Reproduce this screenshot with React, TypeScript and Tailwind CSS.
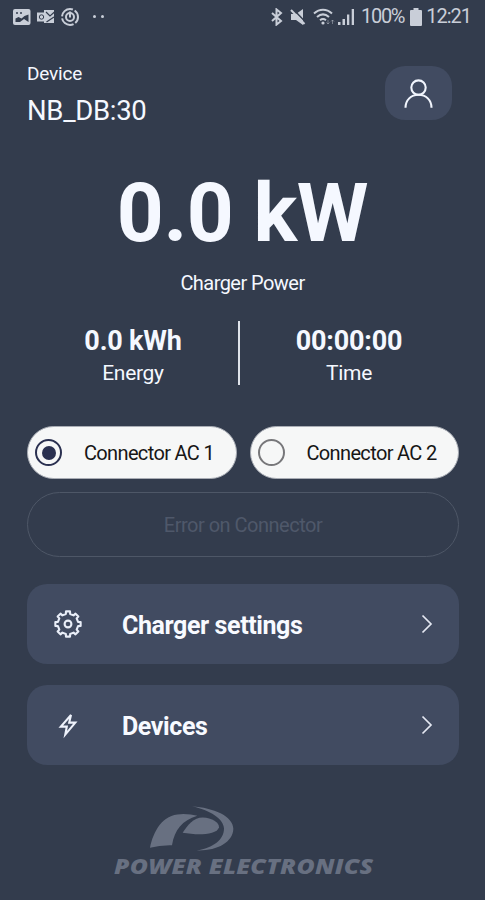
import { useState } from "react";
import type { ReactNode } from "react";
import clsx from "clsx";

const connectors = [
  { id: 1, name: "Connector AC 1" },
  { id: 2, name: "Connector AC 2" },
];

// Outline of a cog with rounded teeth, centred on 0,0
function cogPath(teeth: number, outer: number, inner: number) {
  const step = (Math.PI * 2) / teeth;
  const points: string[] = [];
  for (let i = 0; i < teeth; i++) {
    const a = i * step - Math.PI / 2;
    const corners = [
      [inner, -0.27],
      [outer, -0.2],
      [outer, 0.2],
      [inner, 0.27],
    ];
    corners.forEach(([r, t]) => {
      const x = Math.cos(a + t * step) * r;
      const y = Math.sin(a + t * step) * r;
      points.push(`${x.toFixed(2)} ${y.toFixed(2)}`);
    });
  }
  return `M${points.join("L")}Z`;
}

function GearIcon() {
  return (
    <svg
      viewBox="-15 -15 30 30"
      className="h-[30px] w-[30px]"
      fill="none"
      stroke="#e9eef8"
      strokeWidth="2.1"
      strokeLinejoin="round"
    >
      <path d={cogPath(8, 12.8, 10.3)} />
      <circle r="3.4" />
    </svg>
  );
}

function BoltIcon() {
  return (
    <svg
      viewBox="0 0 20 28"
      className="h-7 w-5"
      fill="none"
      stroke="#eef2fb"
      strokeWidth="2.1"
      strokeLinejoin="miter"
    >
      <path d="M13 4 2.800 15.600h6L7.300 23.600 17.300 11.600h-6.100Z" />
    </svg>
  );
}

function ChevronIcon() {
  return (
    <svg
      viewBox="0 0 12 20"
      className="h-5 w-3"
      fill="none"
      stroke="#e4e8f2"
      strokeWidth="1.7"
    >
      <path d="M1.500 1.500 10 10l-8.500 8.500" />
    </svg>
  );
}

function UserIcon() {
  return (
    <svg
      viewBox="0 0 30 30"
      className="mt-px h-[30px] w-[30px]"
      fill="none"
      stroke="#f1f5fd"
      strokeWidth="2.1"
    >
      <circle cx="14.500" cy="8.600" r="7.200" />
      <path d="M1.500 28.800C1.500 21 7 15.800 14.500 15.800S27.500 21 27.500 28.800" />
    </svg>
  );
}

function StatusBar() {
  return (
    <div className="flex h-[33px] items-center justify-between pr-[14px] pl-[13px] text-[#c9ced8]">
      <div className="flex items-center">
        <svg viewBox="0 0 18 16" className="h-4 w-[18px]">
          <rect width="17.500" height="16" rx="2" fill="currentColor" />
          <path
            d="M2.500 13V9.500l3-1.500 3 1.500L11.500 7l4-1.500V13Z"
            fill="#333c4d"
          />
          <path d="M3 4h2M7 4h2" stroke="#333c4d" strokeWidth="1.500" />
          <path d="m7 13 4-3 4.500 3Z" fill="currentColor" />
        </svg>
        <svg viewBox="0 0 18 16" className="ml-[6px] h-4 w-[18px]">
          <path d="M7 1h10v13H7Z" fill="currentColor" />
          <path d="M0 3.500h9v9H0Z" fill="currentColor" />
          <path
            d="m9 3 4 4 4.500-4M9.500 13 17 8"
            stroke="#333c4d"
            strokeWidth="1.200"
            fill="none"
          />
          <circle
            cx="4.500"
            cy="8"
            r="2.200"
            stroke="#333c4d"
            strokeWidth="1"
            fill="none"
          />
        </svg>
        <svg
          viewBox="0 0 20 20"
          className="ml-[5px] h-5 w-5"
          fill="none"
          stroke="currentColor"
        >
          <circle
            cx="10"
            cy="10"
            r="8"
            strokeWidth="2"
            strokeDasharray="14.800 2"
            strokeDashoffset="8"
          />
          <circle cx="10" cy="10" r="4" strokeWidth="2" />
          <path d="M10 4.500v6" strokeWidth="2" />
        </svg>
        <div className="ml-[13px] flex gap-[5px]">
          <span className="h-[3px] w-[3px] rounded-full bg-[#c9ced8]" />
          <span className="h-[3px] w-[3px] rounded-full bg-[#c9ced8]" />
        </div>
      </div>

      <div className="flex items-center">
        <svg
          viewBox="0 0 12 18"
          className="h-[18px] w-3"
          fill="none"
          stroke="currentColor"
          strokeWidth="2"
        >
          <path d="m1 5 9 8-4.500 3.600V1.400L10 5l-9 8" />
        </svg>
        <svg viewBox="0 0 16 18" className="ml-[7px] h-[18px] w-4">
          <path d="M1 6h5l7-5v16l-7-5H1Z" fill="currentColor" />
          <path d="m2.500 0.500 14 14.500" stroke="#333c4d" strokeWidth="1.500" />
          <path d="m1 2 13.500 14" stroke="currentColor" strokeWidth="2" />
        </svg>
        <svg
          viewBox="0 0 23 18"
          className="ml-[7px] h-[18px] w-[23px]"
          fill="none"
          stroke="currentColor"
        >
          <path
            d="M1 5.500c5.500-5 12.500-5 18 0M4 9c4-3.500 8-3.500 12 0M7 12.200c2-1.600 4-1.600 6 0"
            strokeWidth="2"
          />
          <circle cx="10" cy="15" r="1.600" fill="currentColor" stroke="none" />
          <path
            d="M15 12v4m-1.500-1.500L15 16l1.500-1.500M19.500 16v-4M18 13.500l1.500-1.500 1.500 1.500"
            strokeWidth="1"
            opacity="0.450"
          />
        </svg>
        <svg
          viewBox="0 0 17 17"
          className="ml-[2px] h-[17px] w-[17px]"
          fill="currentColor"
        >
          <path d="M0 14h2.500v3H0ZM4.500 11H7v6H4.500ZM9 6.500h2.300V17H9ZM13.700 1H16v16h-2.300Z" />
        </svg>
        <span className="ml-[6px] text-[20px] leading-[33px] tracking-[-1.300px]">
          100%
        </span>
        <svg
          viewBox="0 0 12 18"
          className="ml-[6px] h-[18px] w-3"
          fill="currentColor"
        >
          <path d="M3.500 0h5v2H11a1 1 0 0 1 1 1v14a1 1 0 0 1-1 1H1a1 1 0 0 1-1-1V3a1 1 0 0 1 1-1h2.500Z" />
        </svg>
        <span className="ml-[4px] text-[20px] leading-[33px] tracking-[-1px]">
          12:21
        </span>
      </div>
    </div>
  );
}

function MenuRow({ icon, label }: { icon: ReactNode; label: string }) {
  return (
    <button className="flex h-20 w-full items-center rounded-[20px] bg-[#414b61] pr-[26px] text-left">
      <span className="flex w-[81px] justify-center">{icon}</span>
      <span className="mt-[3px] flex-1 pl-[14px] text-[25px] leading-8 font-bold tracking-[-0.400px] text-[#f8faff]">
        {label}
      </span>
      <ChevronIcon />
    </button>
  );
}

function Logo() {
  return (
    <div className="flex flex-col items-start text-[#687081]">
      <svg
        viewBox="150 30 252 140"
        className="ml-[36px] h-[47px] w-[84px]"
        fill="currentColor"
      >
        <path d="M150 158C160 108 188 57 242 57Q270 56 292 62C246 76 224 104 216 150Q180 149 150 158Z" />
        <path d="M248 113C262 90 282 67 308 67C336 68 358 82 357 96C352 114 320 118 286 117Q266 116 248 113Z" />
        <path d="M276 33C340 38 400 62 400 101C399 142 350 168 290 166C340 158 372 134 372 100C371 70 330 45 276 33Z" />
      </svg>
      <span className="mt-[2px] origin-left scale-x-[1.18] font-['Open_Sans'] text-[21px] leading-6 font-extrabold tracking-[0.200px] whitespace-nowrap italic">
        POWER ELECTRONICS
      </span>
    </div>
  );
}

export default function App() {
  const [selected, setSelected] = useState(1);

  return (
    <div className="flex h-[900px] w-[485px] flex-col overflow-hidden bg-[#333c4d] font-['Roboto','Liberation_Sans',sans-serif] text-[#f5f8ff]">
      <StatusBar />

      {/* Device */}
      <header className="flex justify-between pt-[33px] pr-[33px] pl-[27px]">
        <div>
          <p className="-mt-[2px] text-[19px] leading-5 tracking-[-0.200px]">
            Device
          </p>
          <p className="mt-[11px] text-[27.500px] leading-8 tracking-[-0.300px]">
            NB_DB:30
          </p>
        </div>
        <button className="flex h-[54px] w-[67px] items-center justify-center rounded-[20px] bg-[#414b61]">
          <UserIcon />
        </button>
      </header>

      {/* Power */}
      <section className="mt-[41px] flex flex-col items-center">
        <p className="text-[82px] leading-[90px] font-bold tracking-[-0.400px]">
          0.0 kW
        </p>
        <p className="mt-[13px] text-[20px] leading-6 tracking-[-0.550px]">
          Charger Power
        </p>
      </section>

      <section className="mt-[26px] flex h-16">
        <div className="flex w-[238px] flex-col items-center pl-[28px]">
          <p className="mt-[4px] text-[27px] leading-8 font-bold tracking-[-0.200px]">
            0.0 kWh
          </p>
          <p className="text-[21px] leading-8 tracking-[-0.300px]">Energy</p>
        </div>
        <div className="w-[2px] bg-[#dfe3ea]" />
        <div className="flex flex-1 flex-col items-center pr-[27px]">
          <p className="mt-[4px] text-[27px] leading-8 font-bold tracking-[-0.200px]">
            00:00:00
          </p>
          <p className="text-[21px] leading-8 tracking-[-0.300px]">Time</p>
        </div>
      </section>

      {/* Connectors */}
      <div className="mt-[41px] flex gap-[13px] pr-[26px] pl-[27px]">
        {connectors.map((connector) => (
          <button
            key={connector.id}
            onClick={() => setSelected(connector.id)}
            className="flex h-[53px] flex-1 items-center rounded-full border border-[#a9adb5] bg-[#f6f7f7] pl-[7px] text-[#161616]"
          >
            <span
              className={clsx(
                "flex h-[27px] w-[27px] items-center justify-center rounded-full border-2",
                selected === connector.id
                  ? "border-[#2a3050]"
                  : "border-[#77777a]"
              )}
            >
              {selected === connector.id && (
                <span className="h-[14px] w-[14px] rounded-full bg-[#2a3050]" />
              )}
            </span>
            <span className="mt-px ml-[22px] text-[20px] leading-6 tracking-[-0.650px] whitespace-nowrap">
              {connector.name}
            </span>
          </button>
        ))}
      </div>

      <div className="mt-[13px] mr-[26px] ml-[27px] flex h-[65px] items-center justify-center rounded-full border border-[#4e5767] text-[20px] tracking-[-0.500px] text-[#4f586a]">
        Error on Connector
      </div>

      {/* Menu */}
      <nav className="mt-[27px] flex flex-col gap-[21px] pr-[26px] pl-[27px]">
        <MenuRow icon={<GearIcon />} label="Charger settings" />
        <MenuRow icon={<BoltIcon />} label="Devices" />
      </nav>

      <footer className="mt-[40px] pl-[114px]">
        <Logo />
      </footer>
    </div>
  );
}
